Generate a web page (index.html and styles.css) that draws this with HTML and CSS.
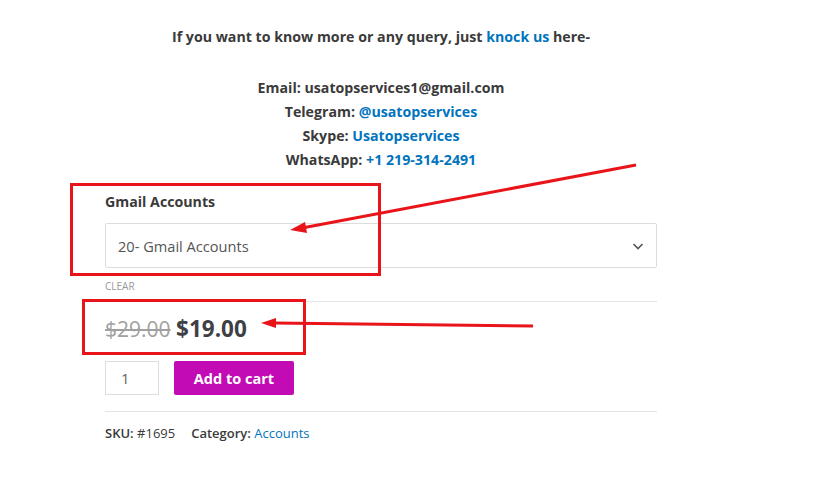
FILE: index.html
```html
<!DOCTYPE html>
<html>
<head>
  <title>Gmail Accounts</title>
  <link rel="stylesheet" href="styles.css">
</head>
<body>
  <div class="product">
    <!-- contact info -->
    <div class="contact">
      <p class="query">If you want to know more or any query, just <a href="#">knock us</a> here-</p>
      <p class="lines">
        Email: usatopservices1@gmail.com<br>
        Telegram: <a href="#">@usatopservices</a><br>
        Skype: <a href="#">Usatopservices</a><br>
        WhatsApp: <a href="#">+1 219-314-2491</a>
      </p>
    </div>

    <!-- variation -->
    <div class="variation">
      <label class="var-label">Gmail Accounts</label>
      <div class="select">
        <span>20- Gmail Accounts</span>
        <svg width="14" height="14" viewBox="0 0 14 14"><path d="M2.5 5 L7 9.5 L11.5 5" fill="none" stroke="#555" stroke-width="1.6"/></svg>
      </div>
      <a class="clear" href="#">Clear</a>
    </div>

    <div class="price">
      <del>$29.00</del> <ins>$19.00</ins>
    </div>

    <div class="cart">
      <div class="qty">1</div>
      <button class="add-btn">Add to cart</button>
    </div>

    <div class="meta">
      <span><b>SKU:</b> #1695</span>
      <span><b>Category:</b> <a href="#">Accounts</a></span>
    </div>
  </div>

  <!-- annotations drawn on top -->
  <svg class="marks" width="814" height="492" viewBox="0 0 814 492">
    <rect x="71.5" y="184.5" width="308" height="90" fill="none" stroke="#e8141a" stroke-width="3"/>
    <rect x="83.5" y="300.5" width="221" height="53" fill="none" stroke="#e8141a" stroke-width="3"/>
    <line x1="636" y1="165" x2="302" y2="228" stroke="#e8141a" stroke-width="3"/>
    <polygon points="290,230 305,222 307,233" fill="#e8141a"/>
    <line x1="533" y1="326" x2="274" y2="323" stroke="#e8141a" stroke-width="3"/>
    <polygon points="261,323 276,318 276,328" fill="#e8141a"/>
  </svg>
</body>
</html>
```

FILE: styles.css
```css
body {
  margin: 0;
  background: #fff;
  font-family: "Open Sans", "Noto Sans", sans-serif;
  color: #3a3a3a;
}

a {
  color: #0274be;
  text-decoration: none;
}

.product {
  width: 552px;
  margin-left: 105px;
  padding-top: 26px;
}

.contact {
  text-align: center;
  font-weight: 700;
  font-size: 14.2px;
}

.query {
  margin: 0 0 28px;
  line-height: 22px;
}

.lines {
  margin: 0;
  line-height: 24px;
}

.variation {
  margin-top: 20px;
}

.var-label {
  display: block;
  font-weight: 700;
  font-size: 14.2px;
  line-height: 20px;
}

.select {
  margin-top: 11px;
  height: 43px;
  border: 1px solid #dcdcdc;
  border-radius: 2px;
  display: flex;
  align-items: center;
  justify-content: space-between;
  padding: 0 11px 0 12px;
  font-size: 14.6px;
  color: #555;
}

.clear {
  display: block;
  margin-top: 11px;
  font-size: 10px;
  line-height: 14px;
  text-transform: uppercase;
  color: #999;
  padding-bottom: 8px;
  border-bottom: 1px solid #e4e4e4;
}

.price {
  padding: 10px 0 10px;
  font-size: 21px;
  line-height: 34px;
}

.price del {
  color: #a0a0a0;
}

.price ins {
  text-decoration: none;
  font-weight: 700;
  font-size: 22.5px;
  color: #3f3f46;
}

.cart {
  display: flex;
  gap: 15px;
  padding: 5px 0 16px;
  border-bottom: 1px solid #e4e4e4;
}

.qty {
  width: 54px;
  height: 34px;
  box-sizing: border-box;
  border: 1px solid #ddd;
  padding-left: 15px;
  line-height: 32px;
  font-size: 15px;
  color: #666;
}

.add-btn {
  width: 120px;
  height: 34px;
  background: #c20bb5;
  color: #fff;
  border: none;
  border-radius: 2px;
  font-family: inherit;
  font-weight: 700;
  font-size: 14.5px;
}

.meta {
  padding-top: 11px;
  display: flex;
  gap: 16px;
  font-size: 13px;
  line-height: 20px;
}

.meta b {
  font-weight: 600;
}

.marks {
  position: absolute;
  left: 0;
  top: 0;
  pointer-events: none;
}
```
